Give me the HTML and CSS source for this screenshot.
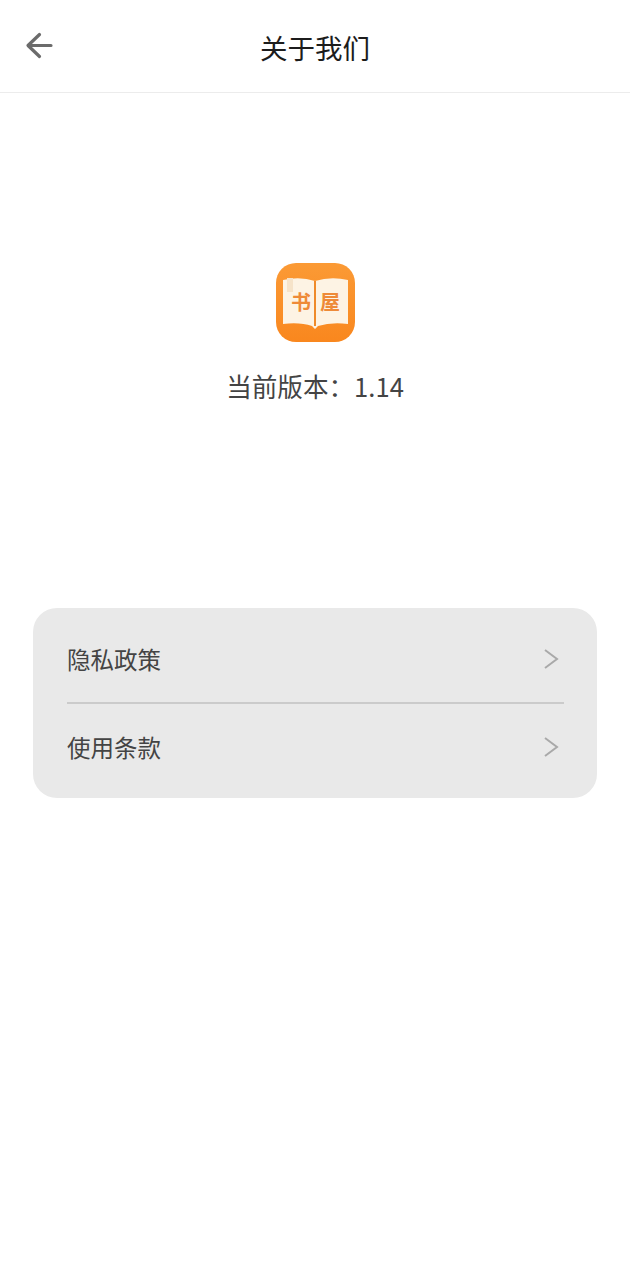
FILE: index.html
```html
<!DOCTYPE html>
<html lang="zh-CN">

<head>
    <meta charset="UTF-8">
    <meta name="viewport" content="width=device-width, initial-scale=1.0">
    <title>关于我们</title>
    <link rel="stylesheet" href="styles.css">
</head>

<body>
    <header class="topbar">
        <button class="back" aria-label="返回">
            <svg width="30" height="30" viewBox="0 0 30 30">
                <path d="M15.5 3.5 L4 14.5 L15.5 25.5 M4.5 14.5 H27" fill="none" stroke="#6b6b6b" stroke-width="3.2" stroke-linecap="round" stroke-linejoin="round" />
            </svg>
        </button>
        <h1 class="title">关于我们</h1>
    </header>

    <section class="about">
        <div class="logo">
            <svg width="79" height="79" viewBox="0 0 79 79">
                <defs>
                    <linearGradient id="logoBg" x1="0" y1="0" x2="0" y2="1">
                        <stop offset="0" stop-color="#fb9a35" />
                        <stop offset="1" stop-color="#f9871e" />
                    </linearGradient>
                </defs>
                <rect width="79" height="79" rx="20" fill="url(#logoBg)" />
                <!-- open book -->
                <path d="M7 17 Q24 13 39 18 Q55 13 72 17 V61 Q55 59 42 63 L39 66 L36 63 Q24 59 7 61 Z" fill="#fdf3e4" />
                <rect x="11" y="15" width="6" height="14" fill="#f6e3c9" />
                <rect x="38" y="18" width="2" height="45" fill="#ef8a2a" />
                <text class="logo-char" x="15" y="47">书</text>
                <text class="logo-char" x="44" y="47">屋</text>
            </svg>
        </div>
        <p class="version">当前版本：1.14</p>
    </section>

    <ul class="menu">
        <li class="menu-row">
            <span>隐私政策</span>
            <svg class="chevron" width="16" height="22" viewBox="0 0 16 22">
                <path d="M2 2 L14 11 L2 20" fill="none" stroke="#a9a9a9" stroke-width="2" />
            </svg>
        </li>
        <li class="menu-row">
            <span>使用条款</span>
            <svg class="chevron" width="16" height="22" viewBox="0 0 16 22">
                <path d="M2 2 L14 11 L2 20" fill="none" stroke="#a9a9a9" stroke-width="2" />
            </svg>
        </li>
    </ul>
</body>

</html>
```

FILE: styles.css
```css
* {
    box-sizing: border-box;
}

body {
    margin: 0;
    height: 1280px;
    background-color: #fff;
    font-family: "Noto Sans CJK SC", "Liberation Sans", sans-serif;
    color: #444;
}

.topbar {
    position: relative;
    display: flex;
    align-items: center;
    justify-content: center;
    height: 93px;
    border-bottom: 1px solid #ececec;
}

.back {
    position: absolute;
    left: 24px;
    top: 31px;
    padding: 0;
    width: 30px;
    height: 30px;
    border: none;
    background: none;
}

.title {
    margin: 0;
    font-size: 27.5px;
    font-weight: 400;
    line-height: 1;
    padding-top: 3px;
    color: #1c1c1c;
}

.about {
    display: flex;
    flex-direction: column;
    align-items: center;
    padding-top: 170px;
}

.logo {
    width: 79px;
    height: 79px;
}

.logo svg {
    display: block;
}

.logo-char {
    font-size: 20px;
    font-weight: 700;
    fill: #ee8a38;
    font-family: "Noto Sans CJK SC", sans-serif;
}

.version {
    margin: 26px 0 0;
    font-size: 25.6px;
    line-height: 36px;
}

.menu {
    list-style: none;
    margin: 204px 33px 0;
    padding: 8px 33px 0 34px;
    height: 190px;
    border-radius: 24px;
    background-color: #e9e9e9;
}

.menu-row {
    display: flex;
    align-items: center;
    justify-content: space-between;
    height: 86px;
    padding-right: 5px;
    font-size: 23.5px;
}

.menu-row:first-child {
    height: 88px;
    border-bottom: 2px solid #cbcbcb;
}
```
